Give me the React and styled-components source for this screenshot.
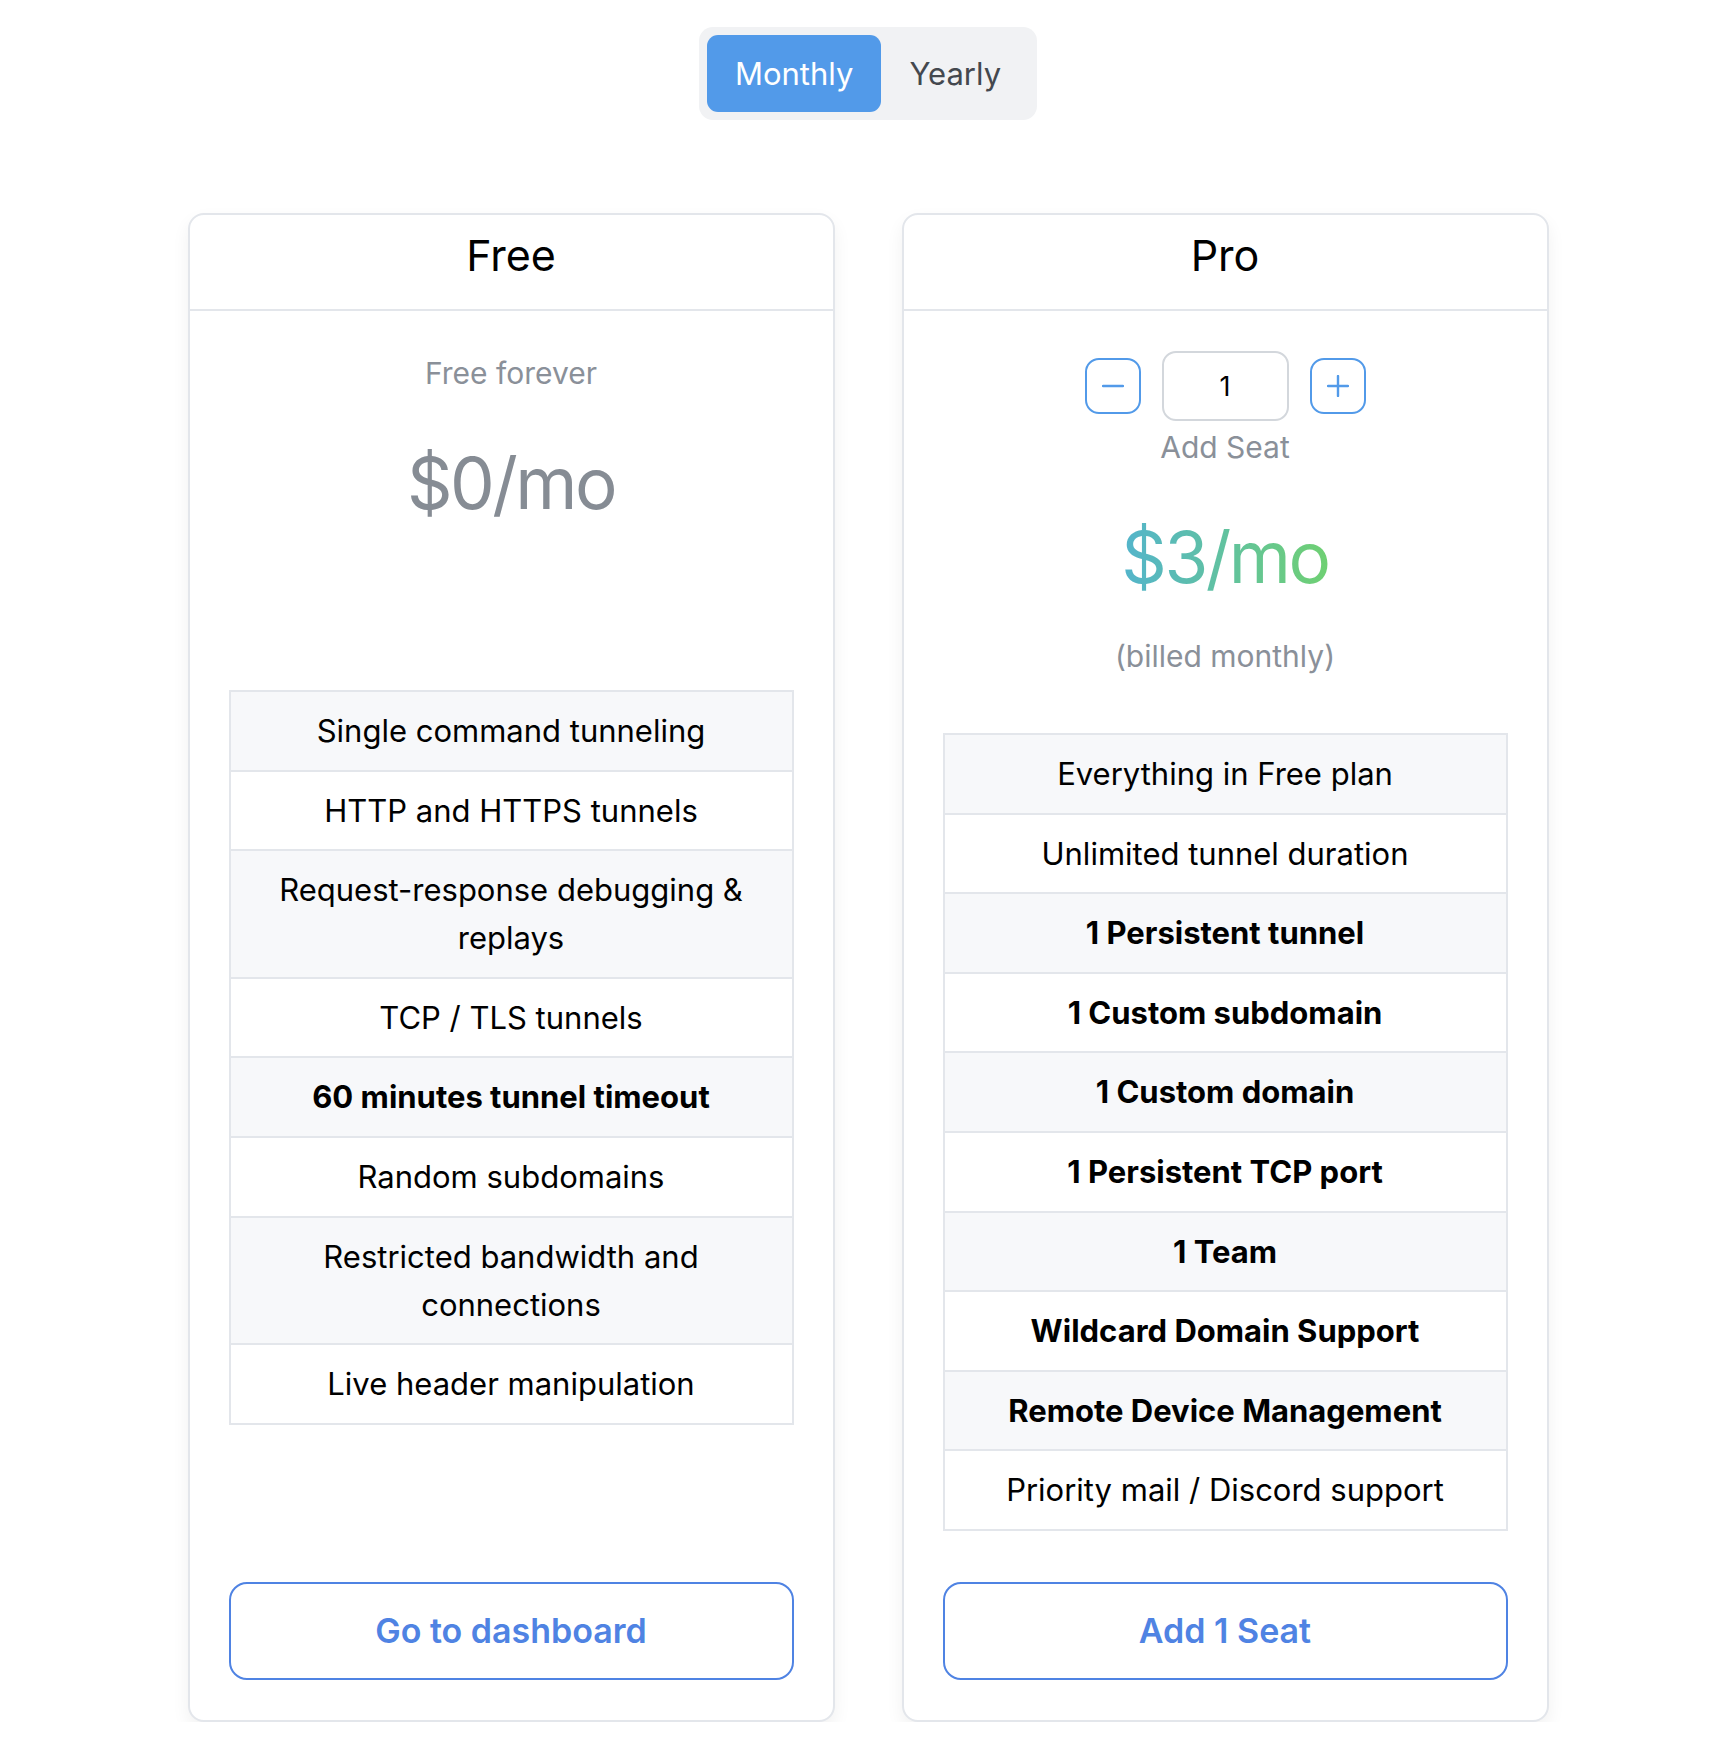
import React, { useState } from 'react'
import styled, { createGlobalStyle } from 'styled-components'

const GlobalStyle = createGlobalStyle`
  body {
    margin: 0;
    background: #ffffff;
    font-family: Inter, "Noto Sans", "Liberation Sans", sans-serif;
    color: #000;
  }
`

const Page = styled.div`
  display: flex;
  flex-direction: column;
  align-items: center;
  padding-top: 27px;
`

const Toggle = styled.div`
  display: flex;
  padding: 8px;
  background: #f1f2f4;
  border-radius: 14px;
`

const ToggleButton = styled.button`
  font-family: inherit;
  font-size: 31px;
  height: 77px;
  padding: 0 28px;
  border: none;
  border-radius: 11px;
  cursor: pointer;
  background: ${props => (props.active ? '#529ae9' : 'transparent')};
  color: ${props => (props.active ? '#ffffff' : '#44484e')};
`

const Cards = styled.div`
  display: flex;
  align-items: stretch;
  gap: 67px;
  margin-top: 93px;
`

const Card = styled.div`
  width: 647px;
  display: flex;
  flex-direction: column;
  border: 2px solid #e3e6eb;
  border-radius: 16px;
  box-sizing: border-box;
  box-shadow: 0 8px 18px rgba(0, 0, 0, 0.06);
  background: #fff;
`

const CardHeader = styled.div`
  text-align: center;
  font-size: 43px;
  line-height: 52px;
  padding: 14px 0 28px;
  border-bottom: 2px solid #e3e6eb;
`

const CardBody = styled.div`
  flex: 1;
  display: flex;
  flex-direction: column;
  align-items: center;
  padding: 40px 39px 40px;
`

const Muted = styled.div`
  color: #8a9099;
  font-size: 30px;
  line-height: 45px;
`

const Price = styled.div`
  font-size: 71px;
  letter-spacing: -2.5px;
  line-height: 114px;
  margin: ${props => (props.$tight ? '30px 0 20px' : '30px 0 0')};
  color: #868c94;
  ${props =>
    props.$gradient &&
    `
    background: linear-gradient(90deg, #53b4cc 0%, #6fd072 100%);
    -webkit-background-clip: text;
    background-clip: text;
    color: transparent;
  `}
`

const Stepper = styled.div`
  display: flex;
  align-items: center;
  gap: 21px;
  margin-bottom: 4px;
`

const StepButton = styled.button`
  width: 56px;
  height: 56px;
  display: flex;
  align-items: center;
  justify-content: center;
  border: 2px solid #529ae9;
  border-radius: 14px;
  background: #fff;
  padding: 0;
  cursor: pointer;
`

const SeatInput = styled.input`
  width: 127px;
  height: 70px;
  box-sizing: border-box;
  border: 2px solid #d3d7dc;
  border-radius: 14px;
  text-align: center;
  font-family: inherit;
  font-size: 27px;
  color: #000;
  outline: none;
`

const Features = styled.div`
  align-self: stretch;
  margin-top: ${props => props.$offset}px;
  border: 2px solid #e3e6eb;
  border-bottom: none;
`

const Feature = styled.div`
  text-align: center;
  font-size: 31px;
  line-height: 48px;
  padding: 15px 40px 14.6px;
  border-bottom: 2px solid #e3e6eb;
  background: ${props => (props.$striped ? '#f7f8fa' : '#ffffff')};
  font-weight: ${props => (props.$bold ? 700 : 400)};
`

const ActionButton = styled.button`
  align-self: stretch;
  margin-top: auto;
  height: 98px;
  border: 2px solid #4f83e3;
  border-radius: 18px;
  background: #fff;
  color: #4f83e3;
  font-family: inherit;
  font-size: 34px;
  font-weight: 600;
  cursor: pointer;
`

const Spacer = styled.div`
  height: 51px;
  flex-shrink: 0;
`

const freeFeatures = [
  ['Single command tunneling'],
  ['HTTP and HTTPS tunnels'],
  ['Request-response debugging & replays'],
  ['TCP / TLS tunnels'],
  ['60 minutes tunnel timeout', true],
  ['Random subdomains'],
  ['Restricted bandwidth and connections'],
  ['Live header manipulation'],
]

const proFeatures = [
  ['Everything in Free plan'],
  ['Unlimited tunnel duration'],
  ['1 Persistent tunnel', true],
  ['1 Custom subdomain', true],
  ['1 Custom domain', true],
  ['1 Persistent TCP port', true],
  ['1 Team', true],
  ['Wildcard Domain Support', true],
  ['Remote Device Management', true],
  ['Priority mail / Discord support'],
]

const FeatureList = ({ items, offset }) => (
  <Features $offset={offset}>
    {items.map(([text, bold], i) => (
      <Feature key={text} $striped={i % 2 === 0} $bold={bold}>
        {text}
      </Feature>
    ))}
  </Features>
)

const App = () => {
  const [period, setPeriod] = useState('monthly')
  const [seats, setSeats] = useState(1)

  return (
    <Page>
      <GlobalStyle />
      <Toggle>
        <ToggleButton active={period === 'monthly'} onClick={() => setPeriod('monthly')}>
          Monthly
        </ToggleButton>
        <ToggleButton active={period === 'yearly'} onClick={() => setPeriod('yearly')}>
          Yearly
        </ToggleButton>
      </Toggle>

      <Cards>
        <Card>
          <CardHeader>Free</CardHeader>
          <CardBody>
            <Muted>Free forever</Muted>
            <Price>$0/mo</Price>
            <FeatureList items={freeFeatures} offset={150} />
            <Spacer />
            <ActionButton>Go to dashboard</ActionButton>
          </CardBody>
        </Card>

        <Card>
          <CardHeader>Pro</CardHeader>
          <CardBody>
            <Stepper>
              <StepButton onClick={() => setSeats(Math.max(1, seats - 1))}>
                <svg width="22" height="22" viewBox="0 0 22 22">
                  <path d="M1 11h20" stroke="#529ae9" strokeWidth="2.4" strokeLinecap="round" />
                </svg>
              </StepButton>
              <SeatInput value={seats} onChange={e => setSeats(Number(e.target.value) || 1)} />
              <StepButton onClick={() => setSeats(seats + 1)}>
                <svg width="22" height="22" viewBox="0 0 22 22">
                  <path d="M1 11h20M11 1v20" stroke="#529ae9" strokeWidth="2.4" strokeLinecap="round" />
                </svg>
              </StepButton>
            </Stepper>
            <Muted>Add Seat</Muted>
            <Price $gradient $tight>${3 * seats}/mo</Price>
            <Muted>(billed monthly)</Muted>
            <FeatureList items={proFeatures} offset={54} />
            <Spacer />
            <ActionButton>Add {seats} Seat</ActionButton>
          </CardBody>
        </Card>
      </Cards>
    </Page>
  )
}

export default App
